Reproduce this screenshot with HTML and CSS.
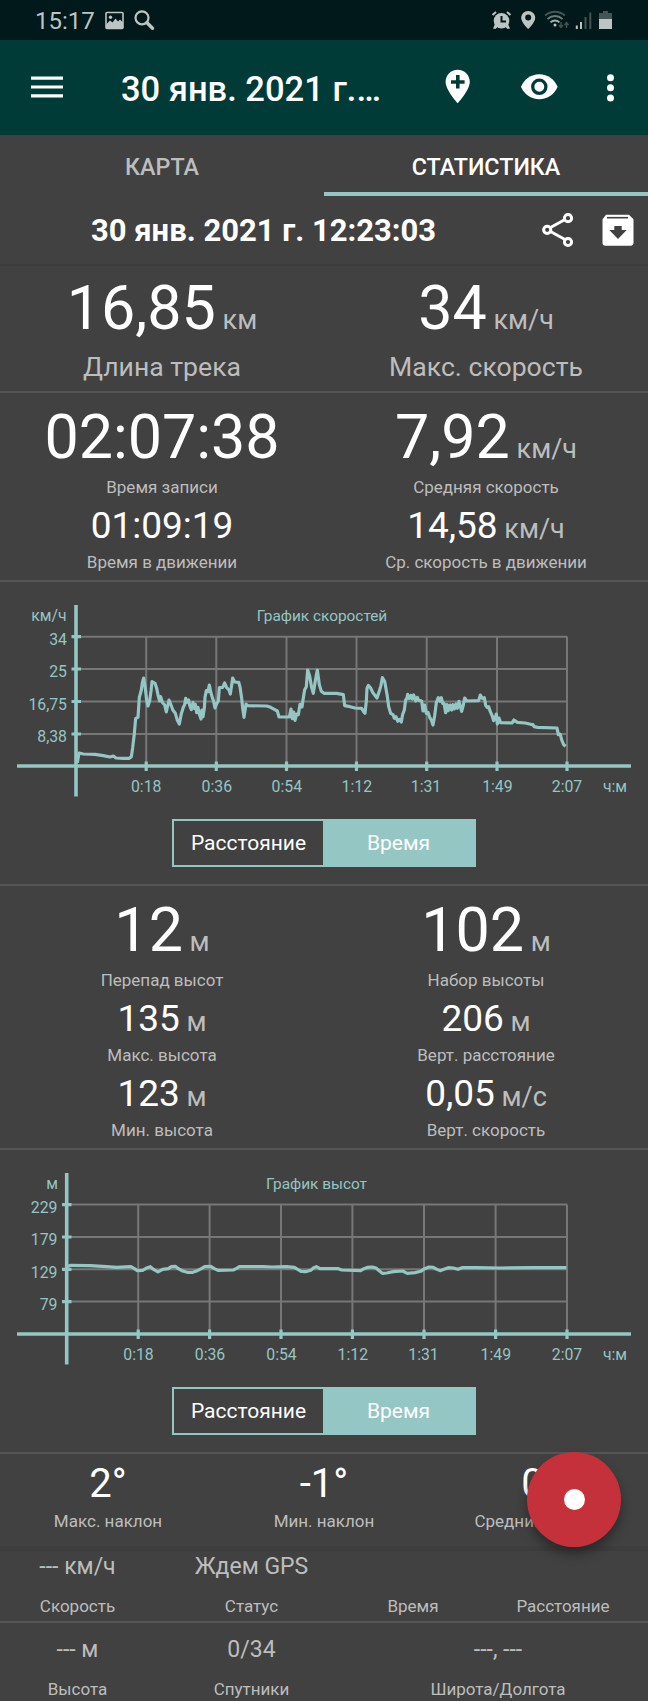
FILE: index.html
```html
<!DOCTYPE html>
<html lang="ru">
<head>
<meta charset="utf-8">
<title>Статистика трека</title>
<link rel="stylesheet" href="styles.css">
</head>
<body>
<header class="status">
  <span class="clock">15:17</span>
  <svg class="status-left" width="50" height="22" viewBox="0 0 50 22">
    <rect x="1" y="2.500" width="17" height="16" rx="1" fill="none" stroke="#bcc5c4" stroke-width="1.600"/>
    <circle cx="5.500" cy="7.200" r="1.700" fill="#bcc5c4"/>
    <path d="M1 14.500l4-4 2.500 2 3-4 2.500 3 2-2 3 3v6H1z" fill="#bcc5c4"/>
    <circle cx="37" cy="7.800" r="6.500" fill="none" stroke="#bcc5c4" stroke-width="2.200"/>
    <path d="M42 12.800l5.500 5.500" stroke="#bcc5c4" stroke-width="3.400" stroke-linecap="round"/>
  </svg>
  <svg class="status-right" width="122" height="22" viewBox="492 9 122 22">
    <g fill="#bcc5c4">
      <circle cx="502.500" cy="20.800" r="7.800"/>
      <path d="M496 24l-2 4.500 2.500.5 3-3zM509 24l2 4.500-2.500.5-3-3z"/>
      <path d="M529.200 11c-4 0-7 3-7 7 0 4.500 7 11 7 11s7-6.500 7-11c0-4-3-7-7-7z"/>
      <path d="M600 19h13v10h-13z"/>
    </g>
    <path d="M493.500 15l3.500-3M511.500 15l-3.500-3" stroke="#bcc5c4" stroke-width="2" fill="none"/>
    <path d="M502.500 16v5.500h4.500" stroke="#01191b" stroke-width="2" fill="none"/>
    <circle cx="529.200" cy="17.500" r="3" fill="#01191b"/>
    <path d="M546 15.500c6-5 14-5 20 0" stroke="#435555" stroke-width="1.800" fill="none"/>
    <path d="M548.500 19c4.500-4 10.500-4 15 0" stroke="#66807d" stroke-width="1.800" fill="none"/>
    <path d="M551.500 22.300c2.500-2.400 6.500-2.400 9 0" stroke="#a3b0ae" stroke-width="1.800" fill="none"/>
    <circle cx="556" cy="25" r="1.500" fill="#bcc5c4"/>
    <path d="M562 22v5m-2-2l2 2.500 2-2.500M567.500 28v-5m-2 2l2-2.500 2 2.500" stroke="#435555" stroke-width="1.400" fill="none"/>
    <path d="M577.800 25.500V29M582 22v7" stroke="#bcc5c4" stroke-width="2"/>
    <path d="M586.500 17v12M591.300 12.500V29" stroke="#435555" stroke-width="2"/>
    <path d="M600 13h4v-2h5v2h4v6h-13z" fill="#435555"/>
  </svg>
</header>

<nav class="appbar">
  <svg class="menu" width="32" height="24" viewBox="0 0 32 24"><path d="M0 3.200h32M0 12h32M0 20.800h32" stroke="#fff" stroke-width="3.200"/></svg>
  <h1 class="app-title">30 янв. 2021 г.…</h1>
  <svg class="actions" width="172" height="36" viewBox="444 69 172 36">
    <path fill="#fff" fill-rule="evenodd" d="M457.700 69.700c-6.800 0-12.100 5.400-12.100 12.100 0 8.500 12.100 21.500 12.100 21.500s12.100-13 12.100-21.500c0-6.700-5.300-12.100-12.100-12.100zM456 75h3.600v5.200h5v3.500h-5v4.800H456v-4.800h-5v-3.500h5z"/>
    <path fill="#fff" d="M521 86.800c3-7.500 10-12.600 18.300-12.600s15.300 5.100 18.300 12.600c-3 7.500-10 12.500-18.300 12.500s-15.300-5-18.300-12.500z"/>
    <circle cx="539.300" cy="86.800" r="6.600" fill="#fff" stroke="#003b38" stroke-width="3.300"/>
    <circle cx="610.500" cy="77.700" r="3.500" fill="#fff"/><circle cx="610.500" cy="87.800" r="3.500" fill="#fff"/><circle cx="610.500" cy="97.900" r="3.500" fill="#fff"/>
  </svg>
</nav>

<div class="tabs">
  <div class="tab">КАРТА</div>
  <div class="tab tab-active">СТАТИСТИКА</div>
</div>

<div class="track">
  <h2 class="track-name">30 янв. 2021 г. 12:23:03</h2>
  <svg class="track-icons" width="92" height="36" viewBox="542 212 92 36">
    <g fill="none" stroke="#fff" stroke-width="3">
      <path d="M550.500 227.500l14.500-8M550.500 231.500l14.500 8"/>
      <circle cx="547.200" cy="229.800" r="3.600"/><circle cx="568" cy="218.200" r="3.600"/><circle cx="568" cy="242" r="3.600"/>
    </g>
    <path fill="#fff" d="M606 214.700h23l4.500 4.500v23.500a3 3 0 0 1-3 3h-25a3 3 0 0 1-3-3v-23.500z"/>
    <path d="M607 217.700h21" stroke="#414141" stroke-width="1.600"/>
    <path fill="#414141" d="M614.300 226h7.400v4h5l-8.700 9-8.700-9h5z"/>
  </svg>
</div>

<section class="stats stats-top">
  <div class="col">
    <div class="value big">16,85<span class="unit"> км</span></div>
    <div class="label wide">Длина трека</div>
  </div>
  <div class="col">
    <div class="value big">34<span class="unit"> км/ч</span></div>
    <div class="label wide">Макс. скорость</div>
  </div>
</section>

<section class="stats stats-time">
  <div class="col">
    <div class="value big">02:07:38</div>
    <div class="label">Время записи</div>
    <div class="value">01:09:19</div>
    <div class="label">Время в движении</div>
  </div>
  <div class="col">
    <div class="value big">7,92<span class="unit"> км/ч</span></div>
    <div class="label">Средняя скорость</div>
    <div class="value">14,58<span class="unit"> км/ч</span></div>
    <div class="label">Ср. скорость в движении</div>
  </div>
</section>

<section class="chart-card">
  <svg class="chart" width="648" height="237" viewBox="0 582 648 237">
    <path class="grid" d="M76 636.700H567M76 669H567M76 701.500H567M76 734H567M146.200 636.500V766M216.300 636.500V766M286.500 636.500V766M356.500 636.500V766M426.700 636.500V766M497 636.500V766M567 636.500V766"/>
    <path class="axis" d="M17 766H631M76 605V796.500"/>
    <path class="tick" d="M71.500 636.700h9.500M71.500 669h9.500M71.500 701.500h9.500M71.500 734h9.500M146.200 761.500v9.500M216.300 761.500v9.500M286.500 761.500v9.500M356.500 761.500v9.500M426.700 761.500v9.500M497 761.500v9.500M567 761.500v9.500"/>
    <polyline class="line" transform="translate(0 590) scale(.33333)" points="232,518 237,489 250,492 285,493 310,497 330,501 340,498 348,504 370,505 388,505 394,500 398,473 403,431 407,385 414,382 418,322 424,300 427,278 431,264 436,295 440,332 444,348 449,332 453,303 456,275 465,280 470,295 475,319 479,333 482,320 487,337 494,345 499,366 503,348 507,330 513,345 519,361 526,370 532,391 538,402 544,371 550,352 554,344 557,325 561,337 566,330 569,346 574,359 579,337 583,355 586,343 590,368 594,352 598,372 603,387 606,360 609,380 613,355 615,322 619,302 624,305 628,285 633,309 637,323 641,334 645,354 650,341 655,333 658,293 668,292 674,279 680,293 687,300 691,312 695,285 698,264 704,276 716,277 720,290 725,325 728,354 732,382 738,342 743,347 800,348 812,352 823,358 832,363 837,381 868,381 873,357 877,386 881,366 885,391 890,372 895,374 900,343 906,351 910,324 914,299 919,290 923,240 929,258 935,293 940,310 946,272 952,240 958,284 964,304 972,310 1010,310 1030,314 1034,347 1050,350 1065,354 1085,355 1091,365 1095,370 1099,333 1101,295 1105,286 1112,294 1118,307 1124,315 1131,324 1138,303 1143,286 1147,263 1154,274 1158,296 1162,319 1166,350 1172,370 1179,374 1183,385 1188,380 1193,394 1198,388 1204,396 1208,373 1213,360 1217,330 1221,324 1223,313 1228,326 1233,316 1237,327 1241,315 1247,333 1252,322 1256,331 1265,333 1269,363 1274,345 1279,370 1284,367 1289,382 1294,390 1299,405 1304,377 1309,338 1315,323 1320,334 1324,323 1328,340 1332,340 1337,368 1341,344 1345,362 1350,345 1355,360 1359,344 1363,357 1368,342 1372,355 1377,334 1381,349 1385,364 1390,345 1394,324 1400,333 1436,332 1441,315 1447,325 1453,323 1457,346 1462,353 1466,350 1471,365 1476,376 1481,392 1486,382 1489,372 1492,402 1497,384 1502,398 1536,399 1542,390 1552,397 1575,399 1592,403 1599,404 1602,410 1613,412 1671,414 1675,434 1681,433 1685,450 1691,464 1697,469"/>
    <g class="ticks end"><text x="66.500" y="621">км/ч</text><text x="67" y="644.500">34</text><text x="67" y="677">25</text><text x="67" y="709.500">16,75</text><text x="67" y="742">8,38</text></g>
    <g class="ticks mid"><text class="chart-title" x="322" y="621">График скоростей</text><text x="146.200" y="791.500">0:18</text><text x="216.800" y="791.500">0:36</text><text x="286.800" y="791.500">0:54</text><text x="356.800" y="791.500">1:12</text><text x="426" y="791.500">1:31</text><text x="497.400" y="791.500">1:49</text><text x="567" y="791.500">2:07</text><text x="615" y="791.500">ч:м</text></g>
  </svg>
  <div class="toggle"><span class="option">Расстояние</span><span class="option chosen">Время</span></div>
</section>

<section class="stats stats-height">
  <div class="col">
    <div class="value big">12<span class="unit"> м</span></div>
    <div class="label">Перепад высот</div>
    <div class="value">135<span class="unit"> м</span></div>
    <div class="label">Макс. высота</div>
    <div class="value">123<span class="unit"> м</span></div>
    <div class="label">Мин. высота</div>
  </div>
  <div class="col">
    <div class="value big">102<span class="unit"> м</span></div>
    <div class="label">Набор высоты</div>
    <div class="value">206<span class="unit"> м</span></div>
    <div class="label">Верт. расстояние</div>
    <div class="value">0,05<span class="unit"> м/с</span></div>
    <div class="label">Верт. скорость</div>
  </div>
</section>

<section class="chart-card">
  <svg class="chart" width="648" height="237" viewBox="0 1150 648 237">
    <path class="grid" d="M66.700 1204.500H567M66.700 1237H567M66.700 1269.300H567M66.700 1301.600H567M138.200 1204.500V1334M209.600 1204.500V1334M281 1204.500V1334M352.400 1204.500V1334M424 1204.500V1334M495.600 1204.500V1334M567 1204.500V1334"/>
    <path class="axis" d="M17 1334H631M66.700 1173V1364.500"/>
    <path class="tick" d="M62 1204.700h9.500M62 1237h9.500M62 1269.300h9.500M62 1301.700h9.500M138.200 1329.500v9.500M209.600 1329.500v9.500M281 1329.500v9.500M352.400 1329.500v9.500M424 1329.500v9.500M495.600 1329.500v9.500M567 1329.500v9.500"/>
    <polyline class="line" transform="translate(0 1150) scale(.33333)" points="200,350 212,346 270,347 320,350 350,352 393,350 402,355 412,362 428,361 438,355 451,350 462,359 474,366 488,358 505,356 514,350 526,349 535,356 548,363 562,367 578,367 592,362 604,356 614,350 632,349 643,356 654,361 700,360 710,355 718,350 790,350 815,351 860,350 883,352 893,358 903,364 917,365 932,361 940,354 949,350 960,356 972,356 1015,356 1025,360 1082,362 1092,356 1103,352 1117,351 1128,354 1136,361 1147,370 1160,369 1180,365 1208,363 1222,370 1245,368 1262,364 1274,356 1287,351 1300,352 1311,358 1320,362 1334,357 1345,353 1360,354 1374,358 1386,353 1430,353 1500,354 1600,353 1699,353"/>
    <g class="ticks end"><text x="58" y="1189">м</text><text x="57.500" y="1212.500">229</text><text x="57.500" y="1245">179</text><text x="57.500" y="1277.500">129</text><text x="57.500" y="1309.800">79</text></g>
    <g class="ticks mid"><text class="chart-title" x="316.500" y="1189">График высот</text><text x="138.500" y="1359.500">0:18</text><text x="210" y="1359.500">0:36</text><text x="281.500" y="1359.500">0:54</text><text x="352.800" y="1359.500">1:12</text><text x="423.500" y="1359.500">1:31</text><text x="495.800" y="1359.500">1:49</text><text x="567" y="1359.500">2:07</text><text x="615" y="1359.500">ч:м</text></g>
  </svg>
  <div class="toggle"><span class="option">Расстояние</span><span class="option chosen">Время</span></div>
</section>

<section class="slopes">
  <div class="slope"><div class="angle">2°</div><div class="label">Макс. наклон</div></div>
  <div class="slope"><div class="angle">-1°</div><div class="label">Мин. наклон</div></div>
  <div class="slope"><div class="angle">0°</div><div class="label">Средний наклон</div></div>
  <button class="record" aria-label="Запись"><span class="record-dot"></span></button>
</section>

<footer class="live">
  <div class="live-row">
    <div class="cell c1"><div class="reading">--- км/ч</div><div class="label">Скорость</div></div>
    <div class="cell c2"><div class="reading">Ждем GPS</div><div class="label">Статус</div></div>
    <div class="cell c3"><div class="reading"></div><div class="label">Время</div></div>
    <div class="cell c4"><div class="reading"></div><div class="label">Расстояние</div></div>
  </div>
  <div class="live-row second">
    <div class="cell c1"><div class="reading">--- м</div><div class="label">Высота</div></div>
    <div class="cell c2"><div class="reading">0/34</div><div class="label">Спутники</div></div>
    <div class="cell c5"><div class="reading">---, ---</div><div class="label">Широта/Долгота</div></div>
  </div>
</footer>
</body>
</html>
```

FILE: styles.css
```css
* { box-sizing: border-box; }
body {
  margin: 0;
  width: 648px;
  height: 1701px;
  overflow: hidden;
  background: #414141;
  color: #fff;
  font-family: Roboto, sans-serif;
}
svg { display: block; flex: none; }
h1, h2 { margin: 0; white-space: nowrap; }

.status {
  height: 40px;
  background: #01191b;
  display: flex;
  align-items: flex-start;
  padding: 0 35px;
}
.clock { width: 70px; font-size: 24px; line-height: 42px; color: #bcc5c4; white-space: nowrap; }
.status-left { margin-top: 10px; }
.status-right { margin: 9px 0 0 auto; }

.appbar {
  height: 95px;
  background: #003b38;
  display: flex;
  align-items: flex-start;
  padding: 0 32px 0 31px;
}
.menu { margin-top: 35px; }
.app-title { margin-left: 58px; font-size: 34.5px; font-weight: 500; line-height: 98px; }
.actions { margin: 29px 0 0 auto; }

.tabs { height: 61px; display: flex; }
.tab {
  flex: 1;
  text-align: center;
  font-size: 23.3px;
  font-weight: 500;
  line-height: 64px;
  color: #bdbdbd;
}
.tab-active { color: #fff; border-bottom: 4px solid #94c6c4; }

.track { height: 70px; display: flex; border-bottom: 2px solid #3c3c3c; padding: 0 14px 0 91px; }
.track-name { font-size: 31px; font-weight: 700; line-height: 70px; }
.track-icons { margin: 16px 0 0 auto; }

.stats { display: flex; border-bottom: 2px solid #555; }
.stats-top { height: 127px; }
.stats-time { height: 189px; padding-top: 4px; }
.stats-height { height: 264px; padding-top: 4px; }
.col { flex: 1; text-align: center; white-space: nowrap; }
.value { height: 55px; font-size: 37px; line-height: 57px; }
.value.big { height: 80px; font-size: 61px; line-height: 80px; }
.stats-top .big { height: 85px; line-height: 85px; }
.unit { font-size: 27px; color: #bdbdbd; }
.label { height: 20px; font-size: 17px; line-height: 20px; color: #bdbdbd; white-space: nowrap; }
.label.wide { height: 30px; font-size: 26.6px; line-height: 31px; }

.chart-card { height: 304px; border-bottom: 2px solid #555; }
.grid { stroke: #777; stroke-width: 2; fill: none; }
.axis { stroke: #94c6c4; stroke-width: 3.6; fill: none; }
.tick { stroke: #94c6c4; stroke-width: 3.2; fill: none; }
.line { stroke: #94c6c4; stroke-width: 9.5; fill: none; stroke-linejoin: round; }
.ticks { fill: #94c6c4; font-size: 15.8px; }
.chart-title { font-size: 15.4px; }
.end { text-anchor: end; }
.mid { text-anchor: middle; }

.toggle { width: 304px; height: 48px; margin: 0 auto; display: flex; border: 2px solid #94c6c4; }
.option { width: 149px; text-align: center; font-size: 21px; line-height: 45px; }
.chosen { width: 151px; background: #94c6c4; }

.slopes { position: relative; display: flex; height: 97px; border-bottom: 5px solid #3c3d3c; }
.slope { flex: 1; text-align: center; }
.angle { height: 57px; padding-top: 4px; font-size: 40px; line-height: 52px; }
.record {
  position: absolute;
  left: 527px;
  top: -2px;
  width: 94px;
  height: 95px;
  padding: 0;
  border: 0;
  border-radius: 50%;
  background: #c4313a;
  box-shadow: 0 7px 11px rgba(0, 0, 0, .35);
  display: flex;
  align-items: center;
  justify-content: center;
}
.record-dot { width: 21px; height: 21px; border-radius: 50%; background: #fff; }

.live-row { display: flex; height: 72px; border-bottom: 2px solid #555; }
.live-row.second { height: 79px; padding-top: 11px; border-bottom: 1px solid #333; }
.cell { text-align: center; }
.c1 { width: 155px; }
.c2 { width: 193px; }
.c3 { width: 130px; }
.c4 { width: 170px; }
.c5 { width: 300px; }
.reading { height: 45px; padding-top: 1px; font-size: 23px; line-height: 30px; color: #bdbdbd; white-space: nowrap; }
```
